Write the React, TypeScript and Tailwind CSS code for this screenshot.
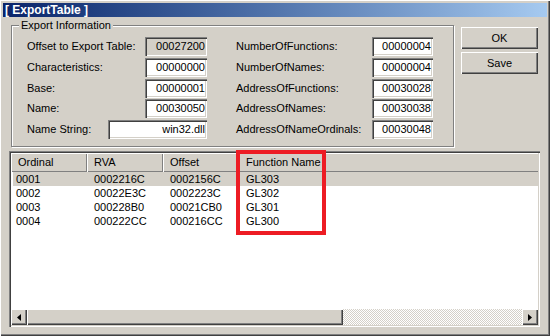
import React from "react";

const sunken =
  "shadow-[inset_1px_1px_#808080,inset_2px_2px_#404040,inset_-1px_-1px_#ffffff,inset_-2px_-2px_#d4d0c8]";
const raised =
  "shadow-[inset_1px_1px_#ffffff,inset_-1px_-1px_#404040,inset_-2px_-2px_#808080]";

function Field({
  label,
  value,
  width = "w-[62px]",
  readOnly = false,
  mt = "",
}: {
  label: string;
  value: string;
  width?: string;
  readOnly?: boolean;
  mt?: string;
}) {
  return (
    <div className={`flex h-[19px] items-center ${mt}`}>
      <div className="flex-1 whitespace-nowrap leading-[19px]">{label}</div>
      <div
        className={`${width} h-[19px] ${sunken} ${
          readOnly ? "bg-[#d4d0c8]" : "bg-white"
        } flex items-center justify-end pr-[2px] leading-none`}
      >
        {value}
      </div>
    </div>
  );
}

const rows = [
  ["0001", "0002216C", "0002156C", "GL303"],
  ["0002", "00022E3C", "0002223C", "GL302"],
  ["0003", "000228B0", "00021CB0", "GL301"],
  ["0004", "000222CC", "000216CC", "GL300"],
];

export default function App() {
  return (
    <div className="relative w-[550px] h-[336px] bg-[#d4d0c8] text-black text-[11px] font-['Liberation_Sans',Arial,sans-serif] shadow-[inset_1px_1px_#ffffff,inset_-1px_-1px_#404040,inset_-2px_-2px_#808080] overflow-hidden">
      {/* title bar */}
      <div className="mx-[3px] pt-[3px]">
        <div className="h-[14px] bg-linear-to-r from-[#0a246a] to-[#a6caf0] pl-[2px] text-white font-bold text-[12px] leading-[14px] whitespace-nowrap">
          [ ExportTable ]
        </div>
      </div>

      {/* top area */}
      <div className="flex pl-[11px] pt-[8px]">
        <div className="relative w-[443px] h-[122px] border border-[#808080] shadow-[inset_1px_1px_#ffffff,1px_1px_#ffffff]">
          <div className="absolute left-[7px] top-[-8px] px-[2px] bg-[#d4d0c8] leading-[14px] text-[11px]">
            Export Information
          </div>
          <div className="flex pl-[15px] pt-[11px]">
            <div className="w-[180px] flex flex-col">
              <Field label="Offset to Export Table:" value="00027200" readOnly />
              <Field label="Characteristics:" value="00000000" mt="mt-[2px]" />
              <Field label="Base:" value="00000001" mt="mt-[2px]" />
              <Field label="Name:" value="00030050" mt="mt-[1px]" />
              <Field
                label="Name String:"
                value="win32.dll"
                width="w-[99px]"
                mt="mt-[2px]"
              />
            </div>
            <div className="ml-[29px] w-[197px] flex flex-col">
              <Field label="NumberOfFunctions:" value="00000004" width="w-[61px]" />
              <Field label="NumberOfNames:" value="00000004" width="w-[61px]" mt="mt-[2px]" />
              <Field label="AddressOfFunctions:" value="00030028" width="w-[61px]" mt="mt-[2px]" />
              <Field label="AddressOfNames:" value="00030038" width="w-[61px]" mt="mt-[1px]" />
              <Field
                label="AddressOfNameOrdinals:"
                value="00030048"
                width="w-[61px]"
                mt="mt-[2px]"
              />
            </div>
          </div>
        </div>
        <div className="ml-[7px] flex flex-col">
          <div
            className={`mt-[2px] w-[77px] h-[22px] ${raised} flex items-center justify-center leading-none`}
          >
            OK
          </div>
          <div
            className={`mt-[3px] w-[77px] h-[22px] ${raised} flex items-center justify-center leading-none`}
          >
            Save
          </div>
        </div>
      </div>

      {/* list view */}
      <div className={`ml-[9px] mt-[4px] w-[531px] h-[176px] p-[2px] bg-white ${sunken}`}>
        <div className="flex flex-col h-full">
          <div className="flex h-[19px] bg-[#d4d0c8] leading-[19px]">
            <div className="w-[76px] pl-[7px] shadow-[inset_1px_1px_#ffffff,inset_-1px_-1px_#808080]">
              Ordinal
            </div>
            <div className="w-[76px] pl-[7px] shadow-[inset_1px_1px_#ffffff,inset_-1px_-1px_#808080]">
              RVA
            </div>
            <div className="w-[74px] pl-[7px] shadow-[inset_1px_1px_#ffffff,inset_-1px_-1px_#808080]">
              Offset
            </div>
            <div className="w-[87px] pl-[9px] whitespace-nowrap shadow-[inset_1px_1px_#ffffff,inset_-1px_-1px_#808080]">
              Function Name
            </div>
            <div className="flex-1 shadow-[inset_1px_1px_#ffffff,inset_0_-1px_#808080]" />
          </div>
          <div className="flex-1 bg-white">
            {rows.map((r, i) => (
              <div
                key={r[0]}
                className={`flex h-[14px] leading-[14px] ml-[2px] ${
                  i === 0 ? "bg-[#d4d0c8]" : ""
                }`}
              >
                <div className="w-[74px] pl-[3px]">{r[0]}</div>
                <div className="w-[76px] pl-[7px]">{r[1]}</div>
                <div className="w-[74px] pl-[7px]">{r[2]}</div>
                <div className="w-[87px] pl-[9px]">{r[3]}</div>
              </div>
            ))}
          </div>
          {/* horizontal scrollbar */}
          <div className="flex h-[16px]">
            <div className={`w-[16px] h-[16px] bg-[#d4d0c8] ${raised} flex items-center justify-center`}>
              <svg width="4" height="7" viewBox="0 0 4 7">
                <path d="M0 3.5 L4 0 L4 7 Z" fill="#000" />
              </svg>
            </div>
            <div className={`w-[316px] h-[16px] bg-[#d4d0c8] ${raised}`} />
            <div className="flex-1 h-[16px] bg-[image:repeating-conic-gradient(#ffffff_0_25%,#d4d0c8_0_50%)] bg-[length:2px_2px]" />
            <div className={`w-[16px] h-[16px] bg-[#d4d0c8] ${raised} flex items-center justify-center`}>
              <svg width="4" height="7" viewBox="0 0 4 7">
                <path d="M4 3.5 L0 0 L0 7 Z" fill="#000" />
              </svg>
            </div>
          </div>
        </div>
      </div>

      {/* red highlight box */}
      <div className="absolute left-[236px] top-[150px] w-[90px] h-[85px] border-4 border-[#ed1c24]" />
    </div>
  );
}
